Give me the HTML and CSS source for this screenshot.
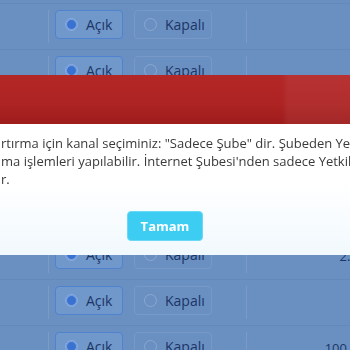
FILE: index.html
```html
<!DOCTYPE html>
<html lang="tr">
<head>
	<meta charset="UTF-8">
	<title>Limit Ayarları</title>
	<link rel="stylesheet" href="styles.css">
</head>
<body>
	<div id="list">
		<div class="row">
			<div class="first"></div>
			<div class="choice">
				<label class="opt on"><i></i>Açık</label>
				<label class="opt"><i></i>Kapalı</label>
			</div>
			<div class="amount"></div>
		</div>
		<div class="row">
			<div class="first"></div>
			<div class="choice">
				<label class="opt on"><i></i>Açık</label>
				<label class="opt"><i></i>Kapalı</label>
			</div>
			<div class="amount"></div>
		</div>
		<div class="row">
			<div class="first"></div>
			<div class="choice">
				<label class="opt on"><i></i>Açık</label>
				<label class="opt"><i></i>Kapalı</label>
			</div>
			<div class="amount">5.000 TL</div>
		</div>
		<div class="row">
			<div class="first"></div>
			<div class="choice">
				<label class="opt on"><i></i>Açık</label>
				<label class="opt"><i></i>Kapalı</label>
			</div>
			<div class="amount">1.000 TL</div>
		</div>
		<div class="row">
			<div class="first"></div>
			<div class="choice">
				<label class="opt on"><i></i>Açık</label>
				<label class="opt"><i></i>Kapalı</label>
			</div>
			<div class="amount">10.000 TL</div>
		</div>
		<div class="row">
			<div class="first"></div>
			<div class="choice">
				<label class="opt on"><i></i>Açık</label>
				<label class="opt"><i></i>Kapalı</label>
			</div>
			<div class="amount">2.500 TL</div>
		</div>
		<div class="row">
			<div class="first"></div>
			<div class="choice">
				<label class="opt on"><i></i>Açık</label>
				<label class="opt"><i></i>Kapalı</label>
			</div>
			<div class="amount">750 TL</div>
		</div>
		<div class="row">
			<div class="first"></div>
			<div class="choice">
				<label class="opt on"><i></i>Açık</label>
				<label class="opt"><i></i>Kapalı</label>
			</div>
			<div class="amount">100.000 TL</div>
		</div>
	</div>

	<div id="dialog">
		<div class="head"></div>
		<div class="body">
			<p>rtırma için kanal seçiminiz: "Sadece Şube" dir. Şubeden Yetkili onayı ile</p>
			<p>ma işlemleri yapılabilir. İnternet Şubesi'nden sadece Yetkili onayı ile</p>
			<p>r.</p>
			<div class="btns"><a href="javascript:">Tamam</a></div>
		</div>
	</div>
</body>
</html>
```

FILE: styles.css
```css
html, body {
	margin: 0;
	padding: 0;
	background: #6a90c1;
	overflow: hidden;
	font-family: 'Open Sans', 'Noto Sans', sans-serif;
}
#list {
	padding-top: 3px;
}
.row {
	display: flex;
	height: 45px;
	border-top: 1px solid #6388ba;
}
.first {
	width: 48px;
	margin: 6px 0 6px;
	border-right: 1px solid #7a9bc8;
}
.choice {
	width: 191px;
	display: flex;
	gap: 11px;
	padding: 6px 0 0 6px;
}
.opt {
	box-sizing: border-box;
	display: flex;
	align-items: center;
	height: 29px;
	padding: 0 0 0 9px;
	border: 1px solid #7799c8;
	border-radius: 4px;
	font-size: 14px;
	color: #1b3566;
}
.opt.on {
	width: 68px;
	background: #7098cb;
	border-color: #4f82cf;
}
.opt:not(.on) {
	width: 78px;
}
.opt i {
	box-sizing: border-box;
	width: 13px;
	height: 13px;
	margin-right: 8px;
	border-radius: 50%;
	border: 1px solid #8aa8d2;
}
.opt.on i {
	border-color: #8fb0e2;
	background: #3a72d2;
	box-shadow: inset 0 0 0 1px #7ea3dd;
}
.amount {
	flex: 1;
	margin: 6px -40px 6px 0;
	border-left: 1px solid #7a9bc8;
	white-space: nowrap;
	font-size: 13px;
	line-height: 33px;
	color: #1b3566;
	text-align: right;
}

#dialog {
	position: fixed;
	top: 75px;
	left: -30px;
	right: -30px;
}
#dialog .head {
	height: 49px;
	background:
		linear-gradient(90deg, rgba(255,255,255,0) 312px, rgba(255,255,255,0.05) 318px),
		linear-gradient(180deg, #b42727 0%, #ad2323 60%, #9e1c1c 100%);
}
#dialog .body {
	height: 131px;
	padding: 10px 0 0 31px;
	box-sizing: border-box;
	background: linear-gradient(180deg, #fff 45%, #f1f9fd 100%);
	color: #3a3a3a;
	font-size: 13px;
}
#dialog p {
	margin: 0;
	line-height: 18px;
	white-space: nowrap;
}
.btns {
	margin: 23px 0 0 126px;
}
.btns a {
	display: block;
	width: 76px;
	height: 30px;
	box-sizing: border-box;
	border-radius: 4px;
	background: #3dcdf2;
	border: 1px solid #6ad9f5;
	color: #fff;
	font-weight: bold;
	font-size: 13px;
	line-height: 28px;
	text-align: center;
	text-decoration: none;
}
```
